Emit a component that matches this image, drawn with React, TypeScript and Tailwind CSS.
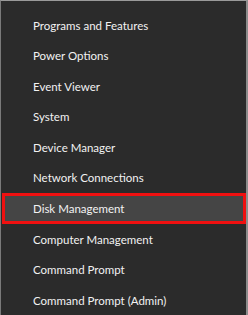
const items = [
  "Programs and Features",
  "Power Options",
  "Event Viewer",
  "System",
  "Device Manager",
  "Network Connections",
  "Disk Management",
  "Computer Management",
  "Command Prompt",
  "Command Prompt (Admin)",
];

export default function App() {
  return (
    <div className="w-[248px] h-[315px] overflow-hidden bg-[#2b2b2b] border-t border-l border-r-2 border-t-[#9a9a9a] border-l-[#7a7a7a] border-r-[#8c8c8c] pt-[9px] font-['Segoe_UI','Lato',sans-serif] text-[11.5px] text-[#f2f2f2]">
      <ul className="flex flex-col">
        {items.map((item) =>
          item === "Disk Management" ? (
            <li
              key={item}
              className="h-[31px] ml-px flex items-center pl-[28px] bg-[#454545] border-[3px] border-[#f01010]"
            >
              {item}
            </li>
          ) : (
            <li key={item} className="h-[30.5px] flex items-center pl-[32px]">
              {item}
            </li>
          )
        )}
      </ul>
    </div>
  );
}
